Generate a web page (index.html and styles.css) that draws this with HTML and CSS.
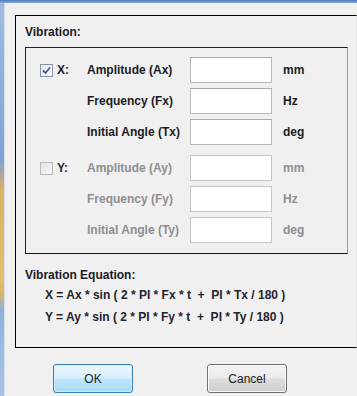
FILE: index.html
```html
<!DOCTYPE html>
<html>
<head>
<meta charset="utf-8">
<link rel="stylesheet" href="styles.css">
</head>
<body>
<div class="titlebar"></div>
<div class="window">
  <div class="frame-left"></div>
  <div class="client">
    <div class="panel">
      <div class="heading">Vibration:</div>
      <div class="axes">
        <div class="axis">
          <span class="check checked"><svg width="9" height="9" viewBox="0 0 9 9"><path d="M1 4.5 L3.5 7 L8 1.5" fill="none" stroke="#3f5a99" stroke-width="1.8"/></svg></span>
          <span class="axis-name">X:</span>
          <span class="lbl">Amplitude (Ax)</span><span class="field"></span><span class="unit">mm</span>
          <span></span><span></span>
          <span class="lbl">Frequency (Fx)</span><span class="field"></span><span class="unit">Hz</span>
          <span></span><span></span>
          <span class="lbl">Initial Angle (Tx)</span><span class="field"></span><span class="unit">deg</span>
        </div>
        <div class="axis disabled">
          <span class="check"></span>
          <span class="axis-name">Y:</span>
          <span class="lbl">Amplitude (Ay)</span><span class="field"></span><span class="unit">mm</span>
          <span></span><span></span>
          <span class="lbl">Frequency (Fy)</span><span class="field"></span><span class="unit">Hz</span>
          <span></span><span></span>
          <span class="lbl">Initial Angle (Ty)</span><span class="field"></span><span class="unit">deg</span>
        </div>
      </div>
      <div class="heading eq-heading">Vibration Equation:</div>
      <div class="eqs">
        <div class="eq">X = Ax * sin ( 2 * PI * Fx * t &nbsp;+ &nbsp;PI * Tx / 180 )</div>
        <div class="eq">Y = Ay * sin ( 2 * PI * Fy * t &nbsp;+ &nbsp;PI * Ty / 180 )</div>
      </div>
    </div>
    <div class="buttons">
      <button class="btn btn-default">OK</button>
      <button class="btn">Cancel</button>
    </div>
  </div>
</div>
</body>
</html>
```
FILE: styles.css
```css
html, body {
  margin: 0;
  padding: 0;
  background: #f0f0f0;
  overflow: hidden;
  font-family: "Liberation Sans", Arial, sans-serif;
  font-size: 12px;
  color: #1c1c24;
}
.titlebar {
  height: 3px;
  background: linear-gradient(to bottom, #4c7bbd, #86a9d6);
}
.window {
  display: flex;
  height: 393px;
}
.frame-left {
  width: 4px;
  flex: none;
  background: linear-gradient(to bottom, #9fbbe0 0%, #7ea3d3 40%, #d8b066 47%, #e4be72 70%, #d9b46a 74%, #8fb0db 78%, #a9c3e6 100%);
  border-right: 1px solid #d7dde5;
}
.client {
  flex: 1;
  min-width: 0;
  padding-left: 10px;
  padding-top: 12px;
}
.panel {
  border: 1px solid #000;
  border-right: 1px solid #e4e4e4;
  padding: 9px 0 18px 9px;
  height: 304px;
}
.heading {
  font-weight: bold;
  line-height: 14px;
  color: #1a1a26;
}
.axes {
  margin-top: 8px;
  width: 323px;
  border: 1px solid;
  border-color: #222 #9a9a9a #111 #222;
  padding: 9px 0 0 14px;
  box-sizing: border-box;
  height: 207px;
}
.axis {
  display: grid;
  grid-template-columns: 17px 30px 103px 82px auto;
  grid-auto-rows: 26px;
  row-gap: 5px;
  align-items: center;
  font-weight: bold;
}
.axis + .axis {
  margin-top: 10px;
}
.axis.disabled {
  color: #8e8e8e;
}
.disabled .axis-name {
  color: #2a2a30;
}
.check {
  width: 11px;
  height: 11px;
  border: 1px solid #8f8f8f;
  background: linear-gradient(135deg, #dcdcdc, #fbfbfb);
  display: flex;
  align-items: center;
  justify-content: center;
}
.check.checked {
  background: linear-gradient(135deg, #e6e9ef, #fdfdfd);
  border-color: #8a93a8;
}
.disabled .check {
  border-color: #b8b8b8;
  background: linear-gradient(135deg, #e4e4e4, #f6f6f6);
}
.axis-name {
  line-height: 14px;
}
.lbl {
  white-space: nowrap;
}
.field {
  height: 26px;
  box-sizing: border-box;
  background: #fff;
  border: 1px solid #b9b9b9;
  border-top-color: #a9a9a9;
}
.disabled .field {
  border-color: #c4c4c4;
}
.unit {
  padding-left: 11px;
}
.eq-heading {
  margin-top: 14px;
}
.eqs {
  margin-top: 2px;
  padding-left: 20px;
  font-weight: bold;
  line-height: 22px;
  letter-spacing: 0;
  color: #24242e;
}
.eq {
  white-space: nowrap;
}
.buttons {
  display: flex;
  gap: 74px;
  margin-top: 16px;
  padding-left: 38px;
}
.btn {
  width: 80px;
  height: 29px;
  font-family: "Liberation Sans", Arial, sans-serif;
  font-size: 12px;
  color: #1c1c1c;
  border: 1px solid #707070;
  border-radius: 3px;
  background: linear-gradient(to bottom, #f4f4f4 0%, #ebebeb 48%, #dcdcdc 52%, #cfcfcf 100%);
  box-shadow: inset 0 0 0 1px #fbfbfb;
  padding: 0;
}
.btn-default {
  border-color: #3c7fb1;
  background: linear-gradient(to bottom, #eaf6fd 0%, #d9f0fc 48%, #bee6fd 52%, #a7d9f5 100%);
  box-shadow: inset 0 0 0 1px #d0ecfb;
}
```
